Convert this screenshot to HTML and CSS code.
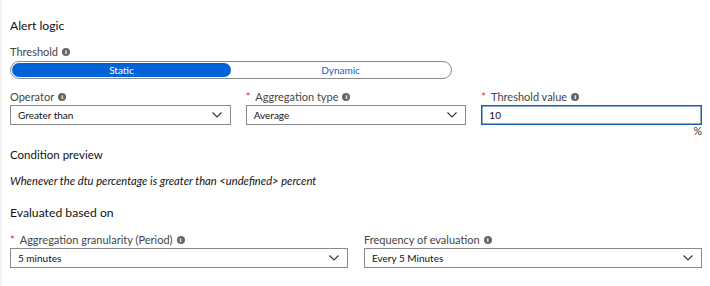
FILE: index.html
```html
<!DOCTYPE html>
<html>
<head>
<meta charset="utf-8">
<link rel="stylesheet" href="styles.css">
</head>
<body>
<div class="page">
  <h2 class="section-title">Alert logic</h2>

  <div class="label label-threshold">Threshold <span class="info">i</span></div>
  <div class="toggle">
    <div class="toggle-opt active">Static</div>
    <div class="toggle-opt">Dynamic</div>
  </div>

  <div class="row three">
    <div class="field">
      <div class="label">Operator <span class="info">i</span></div>
      <div class="select"><span>Greater than</span><svg class="chev" viewBox="0 0 10 6" width="10" height="6"><path d="M0.5 0.5 L5 5 L9.5 0.5" fill="none" stroke="#333" stroke-width="1.1"/></svg></div>
    </div>
    <div class="field">
      <div class="label"><span class="req">*</span> Aggregation type <span class="info">i</span></div>
      <div class="select"><span>Average</span><svg class="chev" viewBox="0 0 10 6" width="10" height="6"><path d="M0.5 0.5 L5 5 L9.5 0.5" fill="none" stroke="#333" stroke-width="1.1"/></svg></div>
    </div>
    <div class="field">
      <div class="label"><span class="req">*</span> Threshold value <span class="info">i</span></div>
      <div class="input focused">10</div>
      <div class="unit">%</div>
    </div>
  </div>

  <div class="sub-title">Condition preview</div>
  <div class="preview">Whenever the dtu percentage is greater than &lt;undefined&gt; percent</div>

  <h2 class="section-title evaluated">Evaluated based on</h2>

  <div class="row two">
    <div class="field">
      <div class="label"><span class="req">*</span> Aggregation granularity (Period) <span class="info">i</span></div>
      <div class="select"><span>5 minutes</span><svg class="chev" viewBox="0 0 10 6" width="10" height="6"><path d="M0.5 0.5 L5 5 L9.5 0.5" fill="none" stroke="#333" stroke-width="1.1"/></svg></div>
    </div>
    <div class="field">
      <div class="label">Frequency of evaluation <span class="info">i</span></div>
      <div class="select"><span>Every 5 Minutes</span><svg class="chev" viewBox="0 0 10 6" width="10" height="6"><path d="M0.5 0.5 L5 5 L9.5 0.5" fill="none" stroke="#333" stroke-width="1.1"/></svg></div>
    </div>
  </div>
</div>
</body>
</html>
```

FILE: styles.css
```css
html, body {
  margin: 0;
  padding: 0;
  background: #fff;
}
body {
  font-family: "Segoe UI", Lato, "Noto Sans", sans-serif;
  color: #000;
  width: 710px;
  height: 286px;
  overflow: hidden;
}
.page {
  border-left: 2px solid #f2f2f2;
  padding: 17px 8px 0 8px;
  height: 286px;
  box-sizing: border-box;
}
.section-title {
  font-size: 12.2px;
  font-weight: normal;
  margin: 0;
  line-height: 18px;
  color: #111;
}
.label {
  font-size: 11px;
  line-height: 14px;
  color: #454545;
  display: flex;
  align-items: center;
  gap: 4px;
  white-space: nowrap;
}
.label-threshold {
  margin-top: 10px;
}
.req {
  color: #d13438;
  margin-right: 1px;
}
.info {
  display: inline-flex;
  align-items: center;
  justify-content: center;
  width: 8px;
  height: 8px;
  border-radius: 50%;
  background: #666;
  color: #fff;
  font-size: 7px;
  font-weight: bold;
  line-height: 1;
  font-family: "Liberation Serif", serif;
}
.toggle {
  margin-top: 2px;
  width: 442px;
  height: 18px;
  box-sizing: border-box;
  border: 1px solid #8a8a8a;
  border-radius: 9px;
  padding: 1px;
  display: flex;
}
.toggle-opt {
  flex: 1;
  text-align: center;
  font-size: 10px;
  line-height: 14px;
  color: #1460c9;
  border-radius: 7px;
}
.toggle-opt.active {
  background: #0063d8;
  color: #fff;
}
.row {
  display: grid;
  margin-top: 11px;
}
.row.three {
  grid-template-columns: repeat(3, 1fr);
  column-gap: 15px;
}
.row.two {
  grid-template-columns: repeat(2, 1fr);
  column-gap: 16px;
  margin-top: 11px;
}
.field .label {
  margin-bottom: 1px;
}
.select, .input {
  height: 20px;
  box-sizing: border-box;
  border: 1px solid #8a8a8a;
  font-size: 10px;
  color: #111;
  display: flex;
  align-items: center;
  justify-content: space-between;
  padding: 0 8px 0 7px;
}
.input.focused {
  border: 1px solid #1d5fa6;
  box-shadow: inset 0 0 0 0.5px #1d5fa6;
}
.chev {
  display: block;
}
.unit {
  text-align: right;
  font-size: 10.5px;
  line-height: 12px;
  color: #333;
}
.sub-title {
  font-size: 11.5px;
  line-height: 16px;
  color: #111;
  margin-top: 10px;
}
.preview {
  font-size: 11.2px;
  font-style: italic;
  line-height: 14px;
  color: #111;
  margin-top: 11px;
}
.evaluated {
  margin-top: 16px;
}
```
